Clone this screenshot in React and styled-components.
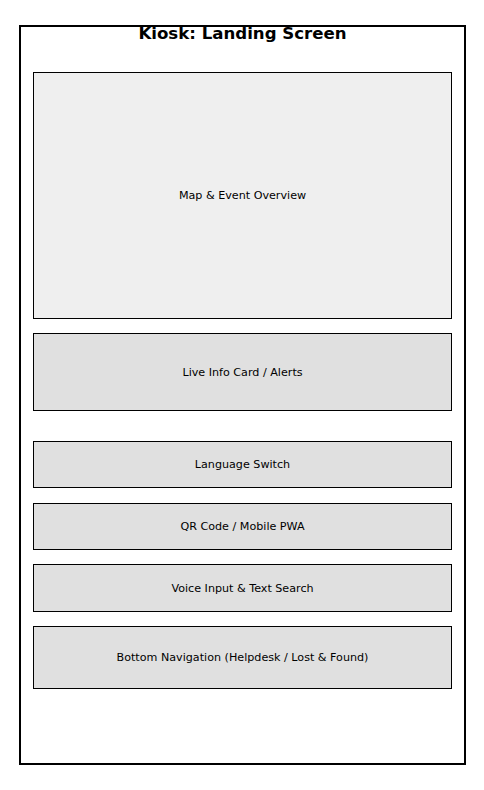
import React from 'react'
import styled, { createGlobalStyle } from 'styled-components'

const GlobalStyle = createGlobalStyle`
  html, body {
    margin: 0;
    padding: 0;
    background: #ffffff;
  }
  body {
    font-family: "DejaVu Sans", "Liberation Sans", sans-serif;
  }
`;

const Page = styled.div`
  padding: 25px 0 0 19px;
`;

const Frame = styled.div`
  box-sizing: border-box;
  width: 447px;
  height: 740px;
  border: 2px solid #000;
  padding: 0 12px;
  display: flex;
  flex-direction: column;
`;

const Title = styled.h1`
  margin: -3px 0 28px;
  font-size: 16.6px;
  line-height: 20px;
  font-weight: bold;
  text-align: center;
  color: #000;
`;

const Panel = styled.div`
  box-sizing: border-box;
  height: ${p => p.$h}px;
  margin-top: ${p => p.$mt || 0}px;
  border: 1px solid #000;
  background: ${p => p.$light ? '#efefef' : '#e0e0e0'};
  display: flex;
  align-items: center;
  justify-content: center;
  font-size: 11.15px;
  color: #000;
`;

const panels = [
  { label: 'Map & Event Overview', h: 247, mt: 0, light: true },
  { label: 'Live Info Card / Alerts', h: 78, mt: 14 },
  { label: 'Language Switch', h: 47, mt: 30 },
  { label: 'QR Code / Mobile PWA', h: 47, mt: 15 },
  { label: 'Voice Input & Text Search', h: 48, mt: 14 },
  { label: 'Bottom Navigation (Helpdesk / Lost & Found)', h: 63, mt: 14 },
]

const App = () => {
  return (
    <Page>
      <GlobalStyle />
      <Frame>
        <Title>Kiosk: Landing Screen</Title>
        {panels.map(p => (
          <Panel key={p.label} $h={p.h} $mt={p.mt} $light={p.light}>
            {p.label}
          </Panel>
        ))}
      </Frame>
    </Page>
  )
}

export default App
